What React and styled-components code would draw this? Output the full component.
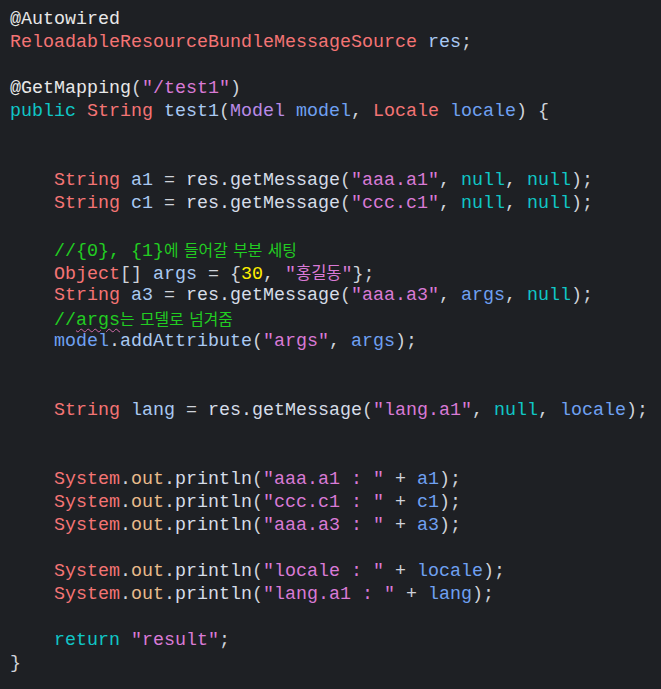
import React from 'react'
import styled, { createGlobalStyle } from 'styled-components'

const GlobalStyle = createGlobalStyle`
  html, body {
    margin: 0;
    padding: 0;
    background: #1e2024;
  }
`

const colors = {
  p: '#cfd3da',
  ann: '#e8e8e8',
  type: '#f47474',
  kw: '#10c6c6',
  str: '#d97ad6',
  var: '#a9c9f2',
  m: '#d6dde8',
  param: '#6fa0f2',
  cls: '#b98ae6',
  out: '#e8bb8b',
  cmt: '#22cc22',
  num: '#fff000',
}

const Editor = styled.div`
  min-height: 689px;
  box-sizing: border-box;
  padding: 8px 10px;
  background: #1e2024;
  font-family: "Liberation Mono", "DejaVu Sans Mono", monospace;
  font-size: 18.33px;
  line-height: 23px;
  color: ${colors.p};
`

const Line = styled.div`
  height: 23px;
  white-space: pre;
`

const Token = styled.span`
  color: ${p => colors[p.$kind] || colors.p};
  ${p => p.$ko && `
    font-family: "Noto Sans CJK KR", sans-serif;
    font-size: ${p.$kind === 'str' ? '16.5px' : '15.8px'};
    word-spacing: 2px;
  `}
  ${p => p.$wavy && `
    text-decoration: underline wavy #d06aa8;
    text-decoration-thickness: 1px;
    text-underline-offset: 3px;
  `}
`

const I = ['p', '    ']

const getMsg = (v, key, mid, last) => [
  I, ['type', 'String'], ['p', ' '], ['var', v], ['p', ' = '], ['m', 'res.getMessage'], ['p', '('],
  ['str', `"${key}"`], ['p', ', '], mid, ['p', ', '], last, ['p', ');'],
]

const println = (label, v) => [
  I, ['type', 'System'], ['p', '.'], ['out', 'out'], ['p', '.'], ['m', 'println'], ['p', '('],
  ['str', `"${label} : "`], ['p', ' + '], ['param', v], ['p', ');'],
]

const lines = [
  [['ann', '@Autowired']],
  [['type', 'ReloadableResourceBundleMessageSource'], ['p', ' '], ['var', 'res'], ['p', ';']],
  [],
  [['ann', '@GetMapping'], ['p', '('], ['str', '"/test1"'], ['p', ')']],
  [['kw', 'public'], ['p', ' '], ['type', 'String'], ['p', ' '], ['var', 'test1'], ['p', '('], ['cls', 'Model'], ['p', ' '],
    ['param', 'model'], ['p', ', '], ['type', 'Locale'], ['p', ' '], ['param', 'locale'], ['p', ') {']],
  [],
  [],
  getMsg('a1', 'aaa.a1', ['kw', 'null'], ['kw', 'null']),
  getMsg('c1', 'ccc.c1', ['kw', 'null'], ['kw', 'null']),
  [],
  [I, ['cmt', '//{0}, {1}'], ['cmt', '에 들어갈 부분 세팅', 'ko']],
  [I, ['type', 'Object'], ['p', '[] '], ['var', 'args'], ['p', ' = {'], ['num', '30'], ['p', ', '],
    ['str', '"'], ['str', '홍길동', 'ko'], ['str', '"'], ['p', '};']],
  getMsg('a3', 'aaa.a3', ['param', 'args'], ['kw', 'null']),
  [I, ['cmt', '//'], ['cmt', 'args', 'wavy'], ['cmt', '는 모델로 넘겨줌', 'ko']],
  [I, ['param', 'model'], ['p', '.'], ['var', 'addAttribute'], ['p', '('], ['str', '"args"'], ['p', ', '], ['param', 'args'], ['p', ');']],
  [],
  [],
  getMsg('lang', 'lang.a1', ['kw', 'null'], ['param', 'locale']),
  [],
  [],
  println('aaa.a1', 'a1'),
  println('ccc.c1', 'c1'),
  println('aaa.a3', 'a3'),
  [],
  println('locale', 'locale'),
  println('lang.a1', 'lang'),
  [],
  [I, ['kw', 'return'], ['p', ' '], ['str', '"result"'], ['p', ';']],
  [['p', '}']],
]

const App = () => {
  return (
    <>
      <GlobalStyle />
      <Editor>
        {lines.map((tokens, i) => (
          <Line key={i}>
            {tokens.map(([kind, text, flag], j) => (
              <Token key={j} $kind={kind} $ko={flag === 'ko'} $wavy={flag === 'wavy'}>
                {text}
              </Token>
            ))}
          </Line>
        ))}
      </Editor>
    </>
  )
}

export default App
